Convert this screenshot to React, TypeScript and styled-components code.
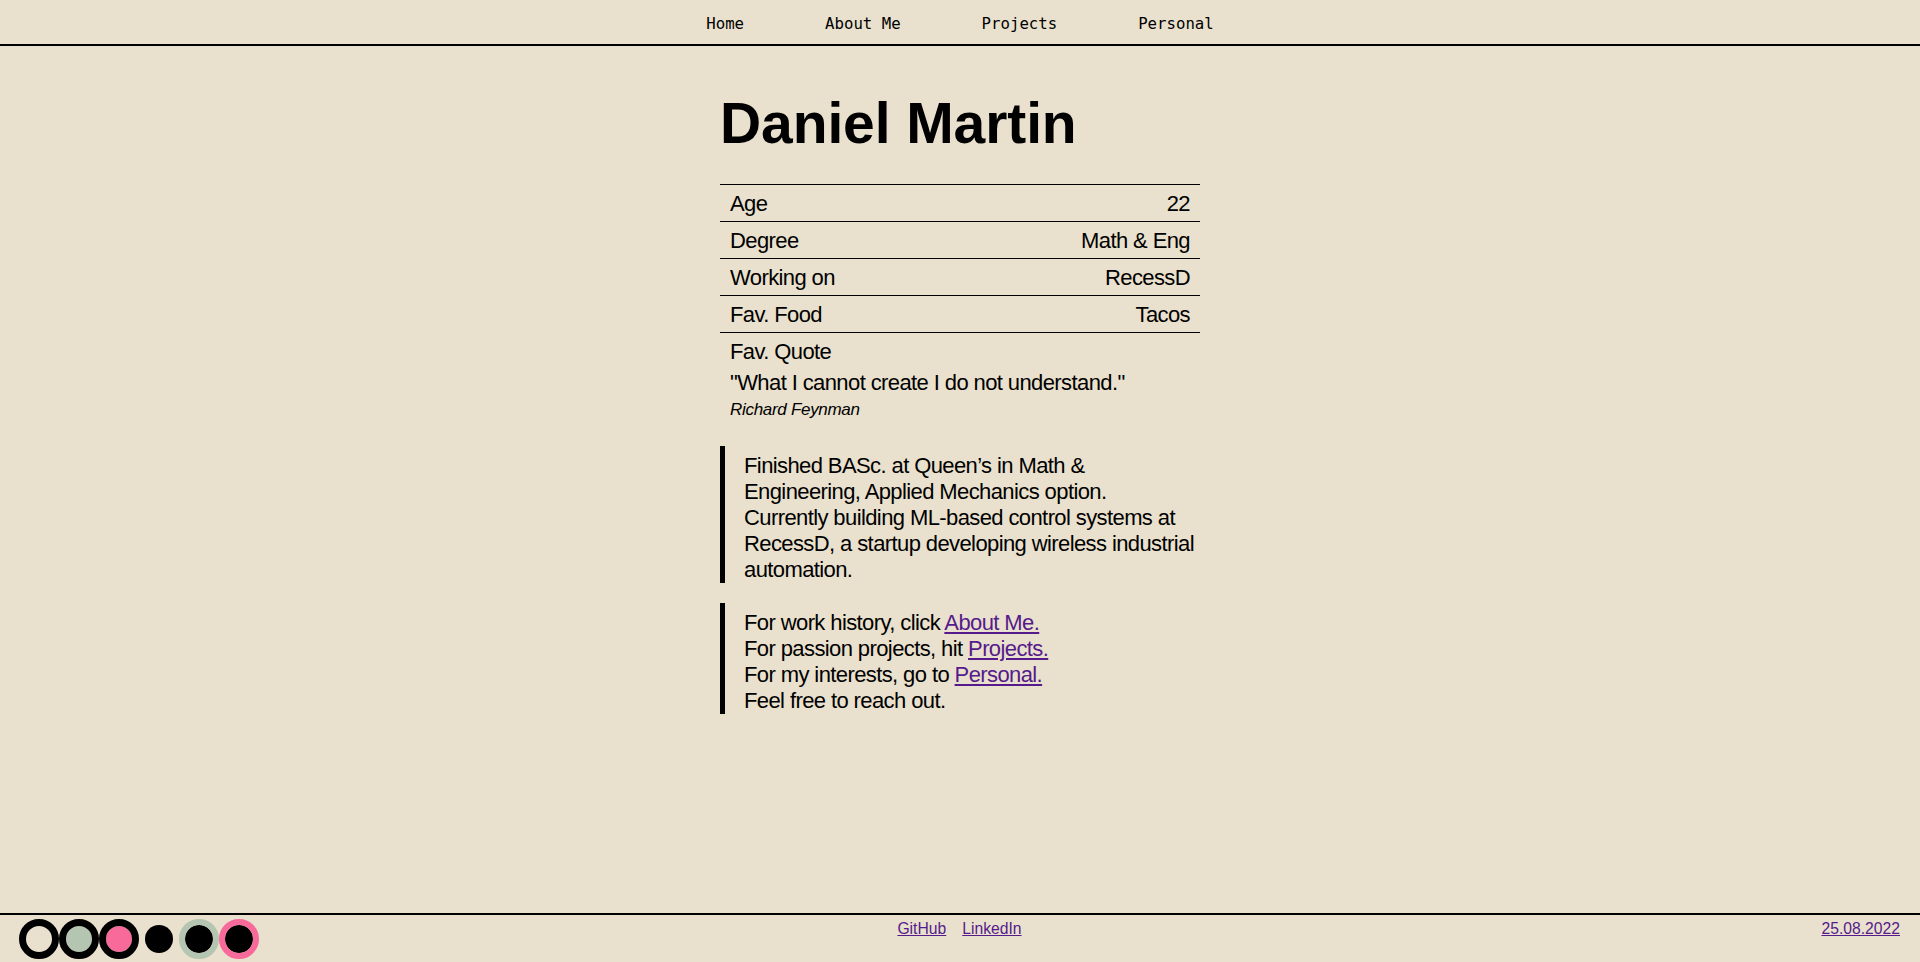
import React from "react";
import styled, { createGlobalStyle } from "styled-components";

const BG = "#E9E1CD";
const SAGE = "#B4C5B1";
const PINK = "#F76A9A";
const LINK = "#551A8B";

const GlobalStyle = createGlobalStyle`
  html, body {
    margin: 0;
    padding: 0;
    background: ${BG};
  }
  body {
    font-family: "Liberation Sans", Arial, sans-serif;
    color: #000;
  }
  * { box-sizing: border-box; }
`;

const Page = styled.div`
  min-height: 100vh;
  display: flex;
  flex-direction: column;
`;

const NavBar = styled.nav`
  height: 46px;
  border-bottom: 2px solid #000;
  display: flex;
  justify-content: center;
  gap: 81px;
`;

const NavLink = styled.a`
  font-family: "DejaVu Sans Mono", "Liberation Mono", monospace;
  font-size: 15.7px;
  line-height: 40px;
  padding-top: 4px;
  color: #000;
  text-decoration: none;
`;

const Main = styled.main`
  flex: 1;
  width: 480px;
  margin: 0 auto;
  padding-bottom: 40px;
`;

const Title = styled.h1`
  margin: 49px 0 32px;
  font-size: 57px;
  line-height: 57px;
  font-weight: 700;
  letter-spacing: -0.1px;
`;

const InfoTable = styled.section`
  font-size: 22px;
  letter-spacing: -0.6px;
`;

const Row = styled.div`
  display: flex;
  justify-content: space-between;
  border-top: 1px solid #000;
  padding: 1px 10px 0;
  line-height: 35px;
`;

const QuoteRow = styled.div`
  border-top: 1px solid #000;
  padding: 4px 10px 0;
`;

const QuoteLabel = styled.div`
  line-height: 30px;
`;

const QuoteText = styled.div`
  margin-top: 3px;
  line-height: 26px;
`;

const QuoteAuthor = styled.div`
  margin-top: 3px;
  font-size: 17px;
  font-style: italic;
  line-height: 22px;
  letter-spacing: -0.3px;
`;

const Block = styled.div<{ $first?: boolean }>`
  margin-top: ${(p) => (p.$first ? "25px" : "20px")};
  border-left: 5px solid #000;
  padding: 7px 0 0 19px;
  font-size: 22px;
  line-height: 26px;
  letter-spacing: -0.6px;
  white-space: nowrap;
`;

const InlineLink = styled.a`
  color: ${LINK};
  text-decoration: underline;
`;

const Footer = styled.footer`
  border-top: 2px solid #000;
  display: grid;
  grid-template-columns: 1fr auto 1fr;
  align-items: start;
  padding: 4px 20px 3px 19px;
`;

const Dots = styled.div`
  display: flex;
`;

const Dot = styled.span<{ $ring: string; $fill: string; $w: number }>`
  display: block;
  width: 40px;
  height: 40px;
  border-radius: 50%;
  border: ${(p) => p.$w}px solid ${(p) => p.$ring};
  background: ${(p) => p.$fill};
  background-clip: padding-box;
`;

const FooterLinks = styled.div`
  display: flex;
  gap: 16px;
  margin-top: 1px;
`;

const FooterLink = styled.a`
  font-family: "Liberation Sans", Arial, sans-serif;
  font-size: 15.7px;
  color: ${LINK};
  text-decoration: underline;
`;

const DateLink = styled(FooterLink)`
  justify-self: end;
  margin-top: 1px;
`;

const rows: [string, string][] = [
  ["Age", "22"],
  ["Degree", "Math & Eng"],
  ["Working on", "RecessD"],
  ["Fav. Food", "Tacos"],
];

const dots = [
  { ring: "#000", fill: BG, w: 7 },
  { ring: "#000", fill: SAGE, w: 7 },
  { ring: "#000", fill: PINK, w: 7 },
  { ring: "transparent", fill: "#000", w: 6 },
  { ring: SAGE, fill: "#000", w: 6 },
  { ring: PINK, fill: "#000", w: 6 },
];

const bioLines = [
  "Finished BASc. at Queen’s in Math &",
  "Engineering, Applied Mechanics option.",
  "Currently building ML-based control systems at",
  "RecessD, a startup developing wireless industrial",
  "automation.",
];

export default function App() {
  return (
    <>
      <GlobalStyle />
      <Page>
        <NavBar>
          <NavLink href="#">Home</NavLink>
          <NavLink href="#">About Me</NavLink>
          <NavLink href="#">Projects</NavLink>
          <NavLink href="#">Personal</NavLink>
        </NavBar>
        <Main>
          <Title>Daniel Martin</Title>
          <InfoTable>
            {rows.map(([k, v]) => (
              <Row key={k}>
                <span>{k}</span>
                <span>{v}</span>
              </Row>
            ))}
            <QuoteRow>
              <QuoteLabel>Fav. Quote</QuoteLabel>
              <QuoteText>"What I cannot create I do not understand."</QuoteText>
              <QuoteAuthor>Richard Feynman</QuoteAuthor>
            </QuoteRow>
          </InfoTable>
          <Block $first>
            {bioLines.map((l, i) => (
              <React.Fragment key={i}>
                {l}
                {i < bioLines.length - 1 && <br />}
              </React.Fragment>
            ))}
          </Block>
          <Block>
            For work history, click <InlineLink href="#">About Me.</InlineLink>
            <br />
            For passion projects, hit <InlineLink href="#">Projects.</InlineLink>
            <br />
            For my interests, go to <InlineLink href="#">Personal.</InlineLink>
            <br />
            Feel free to reach out.
          </Block>
        </Main>
        <Footer>
          <Dots>
            {dots.map((d, i) => (
              <Dot key={i} $ring={d.ring} $fill={d.fill} $w={d.w} />
            ))}
          </Dots>
          <FooterLinks>
            <FooterLink href="#">GitHub</FooterLink>
            <FooterLink href="#">LinkedIn</FooterLink>
          </FooterLinks>
          <DateLink href="#">25.08.2022</DateLink>
        </Footer>
      </Page>
    </>
  );
}
